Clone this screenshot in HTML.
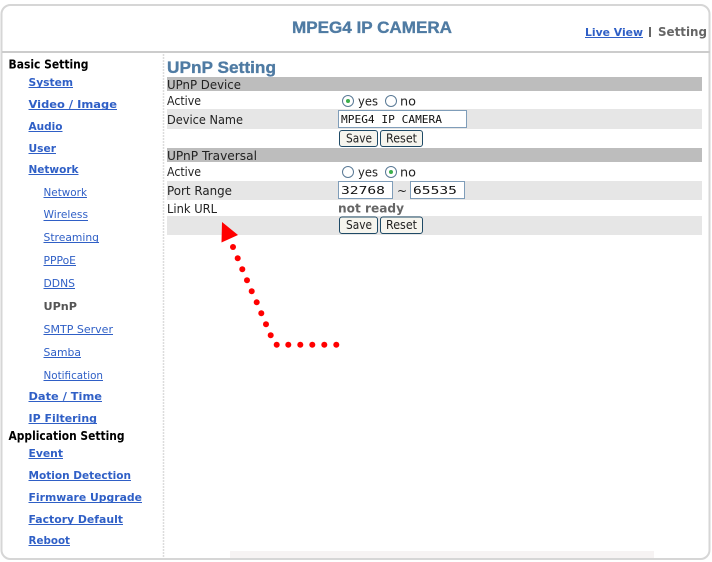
<!DOCTYPE html>
<html><head><meta charset="utf-8"><title>UPnP Setting</title>
<style>
html,body{margin:0;padding:0;background:#fff;width:712px;height:562px;overflow:hidden}
svg{display:block}
text{font-family:"DejaVu Sans","Liberation Sans",sans-serif;font-size:11px;white-space:pre}
.h{font-family:"Liberation Sans",sans-serif;font-weight:bold;font-size:17px;fill:#4f7ba3;stroke:#4f7ba3;stroke-width:.35}
.b{font-weight:bold;font-size:12px;fill:#000}
.l{font-weight:bold;font-size:11px;fill:#2f5fc6}
.s{font-size:11px;fill:#2f5fc6}
.t{fill:#222;font-size:12px}
.m{font-family:"DejaVu Sans Mono","Liberation Mono",monospace;font-size:11px;fill:#111}
.u{fill:#2f5fc6}
.btn{fill:#f6f5ee;stroke:#1f4a66;stroke-width:1}
.r{fill:#fff;stroke:#5a7a96;stroke-width:1}
.i{fill:#fff;stroke:#7f9db9;stroke-width:1}
</style></head><body>
<svg width="712" height="562" viewBox="0 0 712 562" xmlns="http://www.w3.org/2000/svg">
<rect x="1.5" y="5" width="708" height="554" rx="9" fill="#fff" stroke="#d6d6d6" stroke-width="2"/>
<rect x="2" y="51" width="708" height="2" fill="#cccccc"/>
<line x1="163.5" y1="54" x2="163.5" y2="558" stroke="#dcdcdc" stroke-width="1.5" stroke-dasharray="2 1"/>
<rect x="230" y="551" width="424" height="7" fill="#f6f3f3"/>

<text class="h" x="292" y="33" textLength="160" lengthAdjust="spacingAndGlyphs">MPEG4 IP CAMERA</text>
<text class="l" x="585" y="36" textLength="58" lengthAdjust="spacingAndGlyphs">Live View</text><rect class="u" x="585" y="37" width="58" height="1"/>
<rect x="649" y="27" width="2" height="10" fill="#666"/>
<text x="658" y="36" textLength="49" lengthAdjust="spacingAndGlyphs" style="font-weight:bold;font-size:12px;fill:#666">Setting</text>

<!-- nav -->
<text class="b" x="8.5" y="68.500" textLength="80" lengthAdjust="spacingAndGlyphs">Basic Setting</text>
<text class="l" x="28.500" y="86" textLength="44.500" lengthAdjust="spacingAndGlyphs">System</text><rect class="u" x="28.500" y="87" width="44.500" height="1"/>
<text class="l" x="28.500" y="108" textLength="88.500" lengthAdjust="spacingAndGlyphs">Video / Image</text><rect class="u" x="28.500" y="109" width="88.500" height="1"/>
<text class="l" x="28.500" y="130" textLength="34" lengthAdjust="spacingAndGlyphs">Audio</text><rect class="u" x="28.500" y="131" width="34" height="1"/>
<text class="l" x="28.500" y="152" textLength="27.500" lengthAdjust="spacingAndGlyphs">User</text><rect class="u" x="28.500" y="153" width="27.500" height="1"/>
<text class="l" x="28.500" y="173" textLength="50" lengthAdjust="spacingAndGlyphs">Network</text><rect class="u" x="28.500" y="174" width="50" height="1"/>

<text class="s" x="43.500" y="196" textLength="43.500" lengthAdjust="spacingAndGlyphs">Network</text><rect class="u" x="43.500" y="197" width="43.500" height="1"/>
<text class="s" x="43.500" y="218" textLength="44.500" lengthAdjust="spacingAndGlyphs">Wireless</text><rect class="u" x="43.500" y="220" width="44.500" height="1"/>
<text class="s" x="43.500" y="241" textLength="55.500" lengthAdjust="spacingAndGlyphs">Streaming</text><rect class="u" x="43.500" y="242" width="55.500" height="1"/>
<text class="s" x="43.500" y="264" textLength="32.500" lengthAdjust="spacingAndGlyphs">PPPoE</text><rect class="u" x="43.500" y="265" width="32.500" height="1"/>
<text class="s" x="43.500" y="287" textLength="31.500" lengthAdjust="spacingAndGlyphs">DDNS</text><rect class="u" x="43.500" y="288" width="31.500" height="1"/>
<text x="43.500" y="310" textLength="33.500" lengthAdjust="spacingAndGlyphs" style="font-weight:bold;font-size:11px;fill:#555">UPnP</text>
<text class="s" x="43.500" y="333" textLength="69.500" lengthAdjust="spacingAndGlyphs">SMTP Server</text><rect class="u" x="43.500" y="334" width="69.500" height="1"/>
<text class="s" x="43.500" y="356" textLength="37.500" lengthAdjust="spacingAndGlyphs">Samba</text><rect class="u" x="43.500" y="357" width="37.500" height="1"/>
<text class="s" x="43.500" y="379" textLength="59.500" lengthAdjust="spacingAndGlyphs">Notification</text><rect class="u" x="43.500" y="380" width="59.500" height="1"/>

<text class="l" x="28.500" y="400" textLength="73.500" lengthAdjust="spacingAndGlyphs">Date / Time</text><rect class="u" x="28.500" y="401" width="73.500" height="1"/>
<text class="l" x="28.500" y="422" textLength="68.500" lengthAdjust="spacingAndGlyphs">IP Filtering</text><rect class="u" x="28.500" y="423" width="68.500" height="1"/>
<text class="b" x="8.5" y="440" textLength="116" lengthAdjust="spacingAndGlyphs">Application Setting</text>
<text class="l" x="28.500" y="457" textLength="34.500" lengthAdjust="spacingAndGlyphs">Event</text><rect class="u" x="28.500" y="458" width="34.500" height="1"/>
<text class="l" x="28.500" y="479" textLength="102.500" lengthAdjust="spacingAndGlyphs">Motion Detection</text><rect class="u" x="28.500" y="480" width="102.500" height="1"/>
<text class="l" x="28.500" y="501" textLength="113.500" lengthAdjust="spacingAndGlyphs">Firmware Upgrade</text><rect class="u" x="28.500" y="502" width="113.500" height="1"/>
<text class="l" x="28.500" y="523" textLength="94.500" lengthAdjust="spacingAndGlyphs">Factory Default</text><rect class="u" x="28.500" y="524" width="94.500" height="1"/>
<text class="l" x="28.500" y="544" textLength="41.500" lengthAdjust="spacingAndGlyphs">Reboot</text><rect class="u" x="28.500" y="545" width="41.500" height="1"/>

<!-- main bands -->
<rect x="167" y="77" width="535" height="14" fill="#bdbdbd"/>
<rect x="167" y="109" width="535" height="20" fill="#e6e6e6"/>
<rect x="167" y="148" width="535" height="14" fill="#bdbdbd"/>
<rect x="167" y="181" width="535" height="19" fill="#e6e6e6"/>
<rect x="167" y="216" width="535" height="19" fill="#e6e6e6"/>

<text class="h" x="167" y="73" textLength="109" lengthAdjust="spacingAndGlyphs">UPnP Setting</text>
<text class="t" x="167" y="89" textLength="74" lengthAdjust="spacingAndGlyphs">UPnP Device</text>
<text class="t" x="167" y="105" textLength="34" lengthAdjust="spacingAndGlyphs">Active</text>
<text class="t" x="167" y="124" textLength="76" lengthAdjust="spacingAndGlyphs">Device Name</text>
<text class="t" x="167" y="160" textLength="90" lengthAdjust="spacingAndGlyphs">UPnP Traversal</text>
<text class="t" x="167" y="176" textLength="34" lengthAdjust="spacingAndGlyphs">Active</text>
<text class="t" x="167" y="195" textLength="65" lengthAdjust="spacingAndGlyphs">Port Range</text>
<text class="t" x="167" y="213" textLength="50" lengthAdjust="spacingAndGlyphs">Link URL</text>

<!-- radios -->
<circle class="r" cx="348" cy="101" r="5.500"/><circle cx="348" cy="101" r="2" fill="#3cae4c"/>
<text class="t" x="358" y="105.500" textLength="20" lengthAdjust="spacingAndGlyphs">yes</text>
<circle class="r" cx="391" cy="101" r="5.500"/>
<text class="t" x="400" y="105.500" textLength="16" lengthAdjust="spacingAndGlyphs">no</text>

<circle class="r" cx="348" cy="172" r="5.500"/>
<text class="t" x="358" y="176.500" textLength="20" lengthAdjust="spacingAndGlyphs">yes</text>
<circle class="r" cx="391" cy="172" r="5.500"/><circle cx="391" cy="172" r="2" fill="#3cae4c"/>
<text class="t" x="400" y="176.500" textLength="16" lengthAdjust="spacingAndGlyphs">no</text>

<!-- inputs -->
<rect class="i" x="338.500" y="110.500" width="128" height="17"/>
<text class="m" x="341" y="123" textLength="101" lengthAdjust="spacingAndGlyphs">MPEG4 IP CAMERA</text>
<rect class="i" x="338.500" y="181.500" width="54" height="17"/>
<text class="m" x="341" y="194" textLength="44" lengthAdjust="spacingAndGlyphs">32768</text>
<text class="t" x="397" y="195">~</text>
<rect class="i" x="410.500" y="181.500" width="54" height="17"/>
<text class="m" x="413" y="194" textLength="44" lengthAdjust="spacingAndGlyphs">65535</text>
<text x="338" y="212.500" textLength="66" lengthAdjust="spacingAndGlyphs" style="font-weight:bold;font-size:12px;fill:#666">not ready</text>

<!-- buttons -->
<rect class="btn" x="339.500" y="130.500" width="38" height="16" rx="2.500"/>
<text class="t" x="346" y="142.500" textLength="26" lengthAdjust="spacingAndGlyphs">Save</text>
<rect class="btn" x="380.500" y="130.500" width="42" height="16" rx="2.500"/>
<text class="t" x="386" y="142.500" textLength="31" lengthAdjust="spacingAndGlyphs">Reset</text>
<rect class="btn" x="339.500" y="217" width="38" height="16.500" rx="2.500"/>
<text class="t" x="346" y="229" textLength="26" lengthAdjust="spacingAndGlyphs">Save</text>
<rect class="btn" x="380.500" y="217" width="42" height="16.500" rx="2.500"/>
<text class="t" x="386" y="229" textLength="31" lengthAdjust="spacingAndGlyphs">Reset</text>

<!-- arrow -->
<polygon points="222,222 238,235 221.500,242.500" fill="#ff0000"/>
<g fill="#ff0000">
<circle cx="233" cy="247" r="3"/><circle cx="237.700" cy="258.300" r="3"/><circle cx="242.300" cy="269.300" r="3"/>
<circle cx="247" cy="280.300" r="3"/><circle cx="251.700" cy="291.300" r="3"/><circle cx="256.700" cy="302.300" r="3"/>
<circle cx="261.300" cy="313.300" r="3"/><circle cx="266" cy="324.300" r="3"/><circle cx="270.700" cy="335.300" r="3"/>
<circle cx="276.700" cy="344.700" r="3"/><circle cx="288.300" cy="344.700" r="3"/><circle cx="300.300" cy="344.700" r="3"/>
<circle cx="312.300" cy="344.700" r="3"/><circle cx="324.300" cy="344.700" r="3"/><circle cx="336.300" cy="344.700" r="3"/>
</g>
</svg>
</body></html>
